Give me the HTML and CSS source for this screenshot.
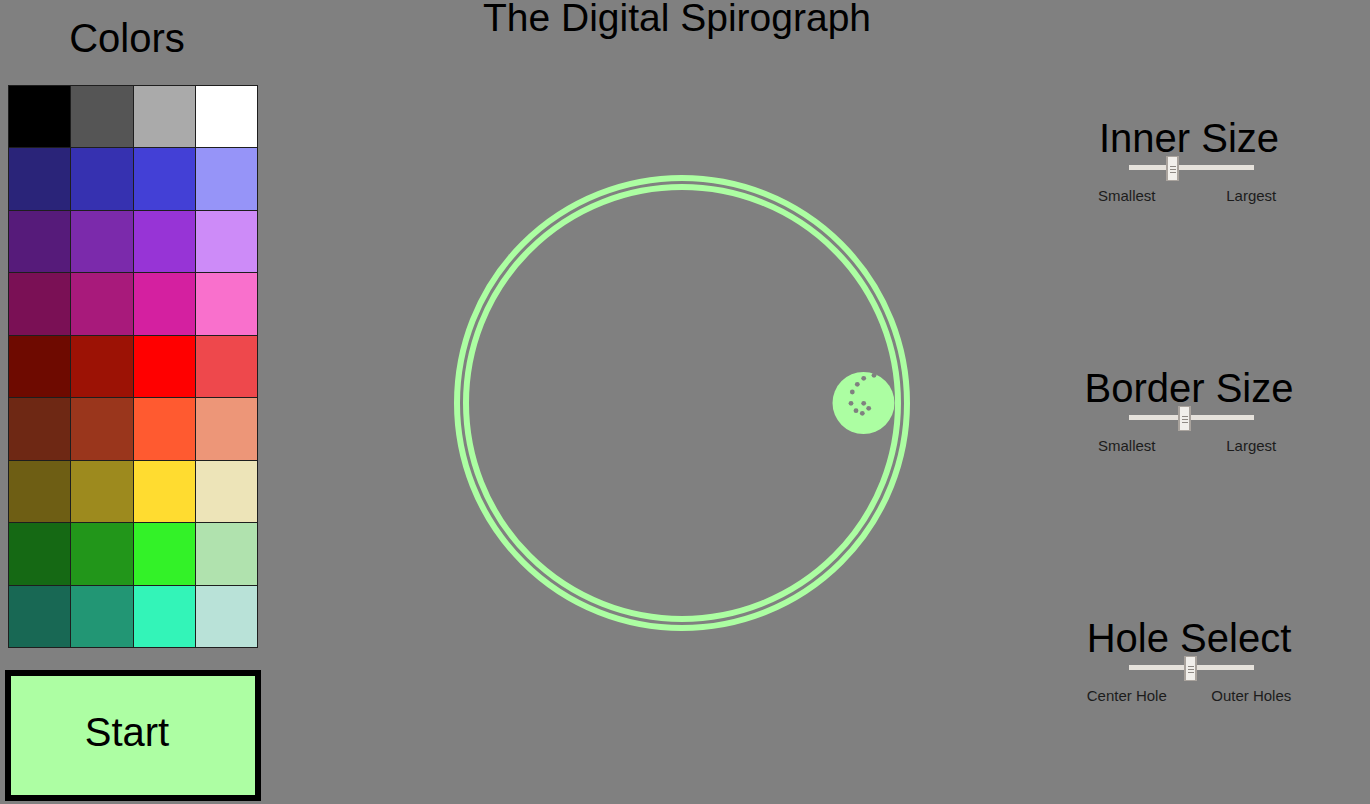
FILE: index.html
```html
<!DOCTYPE html>
<html lang="en">
<head>
<meta charset="utf-8">
<title>The Digital Spirograph</title>
<link rel="stylesheet" href="styles.css">
</head>
<body>
<div class="app">
  <aside class="left">
    <h2 class="colors-title">Colors</h2>
    <div class="palette">
      <div class="swatch" style="background:#000000"></div>
      <div class="swatch" style="background:#555555"></div>
      <div class="swatch" style="background:#aaaaaa"></div>
      <div class="swatch" style="background:#ffffff"></div>
      <div class="swatch" style="background:#2a2479"></div>
      <div class="swatch" style="background:#3631b0"></div>
      <div class="swatch" style="background:#4340d6"></div>
      <div class="swatch" style="background:#9694f8"></div>
      <div class="swatch" style="background:#561b7a"></div>
      <div class="swatch" style="background:#7b2aab"></div>
      <div class="swatch" style="background:#9734d6"></div>
      <div class="swatch" style="background:#cd8bf8"></div>
      <div class="swatch" style="background:#7a1055"></div>
      <div class="swatch" style="background:#a81a7b"></div>
      <div class="swatch" style="background:#d420a0"></div>
      <div class="swatch" style="background:#f970cc"></div>
      <div class="swatch" style="background:#6e0a00"></div>
      <div class="swatch" style="background:#9c1205"></div>
      <div class="swatch" style="background:#ff0000"></div>
      <div class="swatch" style="background:#ee484c"></div>
      <div class="swatch" style="background:#6e2814"></div>
      <div class="swatch" style="background:#9a361c"></div>
      <div class="swatch" style="background:#ff5a30"></div>
      <div class="swatch" style="background:#ed9678"></div>
      <div class="swatch" style="background:#6e5e14"></div>
      <div class="swatch" style="background:#9d8a1e"></div>
      <div class="swatch" style="background:#ffdc30"></div>
      <div class="swatch" style="background:#ede4b8"></div>
      <div class="swatch" style="background:#156914"></div>
      <div class="swatch" style="background:#22961a"></div>
      <div class="swatch" style="background:#33f228"></div>
      <div class="swatch" style="background:#b0e2ae"></div>
      <div class="swatch" style="background:#186854"></div>
      <div class="swatch" style="background:#229674"></div>
      <div class="swatch" style="background:#33f4b8"></div>
      <div class="swatch" style="background:#b9e2d8"></div>
    </div>
    <button class="start">Start</button>
  </aside>

  <main class="center">
    <h1 class="title">The Digital Spirograph</h1>
    <svg class="stage" width="820" height="768" viewBox="0 0 820 768">
      <circle cx="420" cy="367" r="225" fill="none" stroke="#acfea2" stroke-width="6"/>
      <circle cx="420" cy="367" r="216" fill="none" stroke="#acfea2" stroke-width="6"/>
      <circle cx="601.5" cy="367" r="31" fill="#acfea2"/>
      <g fill="#808080">
        <circle cx="601.7" cy="367.3" r="2.4"/>
        <circle cx="606.7" cy="372.3" r="2.4"/>
        <circle cx="600.3" cy="377.3" r="2.4"/>
        <circle cx="594" cy="374.7" r="2.4"/>
        <circle cx="589" cy="367.3" r="2.4"/>
        <circle cx="590.3" cy="356" r="2.4"/>
        <circle cx="595.3" cy="348.3" r="2.4"/>
        <circle cx="601.7" cy="342.3" r="2.4"/>
        <circle cx="612" cy="339.3" r="2.4"/>
      </g>
    </svg>
  </main>

  <aside class="right">
    <section class="control">
      <h2 class="control-title">Inner Size</h2>
      <div class="slider">
        <div class="track"></div>
        <div class="thumb" style="left:37px"></div>
      </div>
      <div class="labels"><span>Smallest</span><span>Largest</span></div>
    </section>
    <section class="control">
      <h2 class="control-title">Border Size</h2>
      <div class="slider">
        <div class="track"></div>
        <div class="thumb" style="left:49px"></div>
      </div>
      <div class="labels"><span>Smallest</span><span>Largest</span></div>
    </section>
    <section class="control">
      <h2 class="control-title">Hole Select</h2>
      <div class="slider">
        <div class="track"></div>
        <div class="thumb" style="left:55px"></div>
      </div>
      <div class="labels"><span>Center Hole</span><span>Outer Holes</span></div>
    </section>
  </aside>
</div>
</body>
</html>
```

FILE: styles.css
```css
* {
  box-sizing: border-box;
}

html, body {
  margin: 0;
  padding: 0;
}

body {
  background: #808080;
  font-family: "Liberation Sans", Arial, sans-serif;
  color: #000;
  width: 1370px;
  height: 804px;
  overflow: hidden;
}

.app {
  display: flex;
  height: 804px;
}

/* Left column */
.left {
  width: 262px;
  flex: none;
  display: flex;
  flex-direction: column;
}

.colors-title {
  width: 254px;
  margin: 18px 0 0 0;
  font-size: 40px;
  line-height: 40px;
  font-weight: normal;
  text-align: center;
}

.palette {
  margin: 27px 0 0 8px;
  width: 250px;
  height: 563px;
  padding: 1px;
  gap: 1px;
  background: #1e1e1e;
  display: grid;
  grid-template-columns: repeat(4, 1fr);
  grid-template-rows: repeat(9, 1fr);
}

.swatch {
  min-width: 0;
  min-height: 0;
}

.start {
  margin: 22px 0 0 5px;
  width: 256px;
  height: 131px;
  border: 6px solid #000;
  background: #adfea3;
  font-family: "Liberation Sans", Arial, sans-serif;
  font-size: 40px;
  line-height: 40px;
  color: #000;
  padding: 0 12px 8px 0;
  text-align: center;
  border-radius: 0;
}

/* Center column */
.center {
  width: 820px;
  flex: none;
  display: flex;
  flex-direction: column;
}

.title {
  margin: 0;
  padding-left: 10px;
  font-size: 39px;
  line-height: 36px;
  height: 36px;
  font-weight: normal;
  text-align: center;
}

.stage {
  display: block;
}

/* Right column */
.right {
  width: 214px;
  flex: none;
  padding-top: 118px;
  display: flex;
  flex-direction: column;
  gap: 163px;
}

.control {
  display: flex;
  flex-direction: column;
}

.control-title {
  margin: 0;
  font-size: 40px;
  line-height: 40px;
  font-weight: normal;
  text-align: center;
  white-space: nowrap;
}

.slider {
  position: relative;
  width: 125px;
  height: 25px;
  margin: -2px 0 0 47px;
}

.track {
  position: absolute;
  left: 0;
  right: 0;
  top: 9px;
  height: 5px;
  background: #e6e2dc;
}

.thumb {
  position: absolute;
  top: 0;
  width: 13px;
  height: 25px;
  background:
    linear-gradient(#8e8984, #8e8984) center 9px / 6px 1px no-repeat,
    linear-gradient(#8e8984, #8e8984) center 12px / 6px 1px no-repeat,
    linear-gradient(#8e8984, #8e8984) center 15px / 6px 1px no-repeat,
    #f1efeb;
  border: 1px solid #a9a39d;
  border-left-width: 2px;
  border-right-width: 2px;
}

.labels {
  display: flex;
  gap: 35px;
  margin-top: 6px;
  font-size: 15px;
  line-height: 18px;
  color: #1c1c1c;
}

.labels span {
  width: 90px;
  text-align: center;
  white-space: nowrap;
}
```
